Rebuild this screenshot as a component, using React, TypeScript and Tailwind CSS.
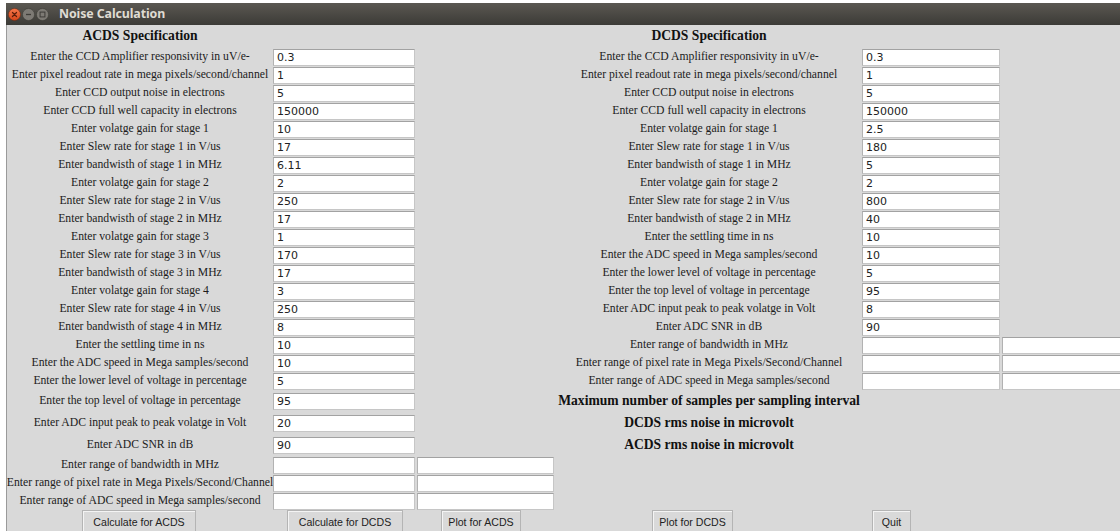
import React from "react";

type Cell =
  | { k: "head"; text: string }
  | { k: "label"; text: string }
  | { k: "bold"; text: string }
  | { k: "entry"; value: string }
  | { k: "none" };

const H = (text: string): Cell => ({ k: "head", text });
const L = (text: string): Cell => ({ k: "label", text });
const B = (text: string): Cell => ({ k: "bold", text });
const E = (value: string): Cell => ({ k: "entry", value });
const N: Cell = { k: "none" };

// Each row: ACDS label, entry, range entry | DCDS label, entry, range entry
const rows: Cell[][] = [
  [H("ACDS Specification"), N, N, H("DCDS Specification"), N, N],
  [L("Enter the CCD Amplifier responsivity in uV/e-"), E("0.3"), N, L("Enter the CCD Amplifier responsivity in uV/e-"), E("0.3"), N],
  [L("Enter pixel readout rate in mega pixels/second/channel"), E("1"), N, L("Enter pixel readout rate in mega pixels/second/channel"), E("1"), N],
  [L("Enter CCD output noise in electrons"), E("5"), N, L("Enter CCD output noise in electrons"), E("5"), N],
  [L("Enter CCD full well capacity in electrons"), E("150000"), N, L("Enter CCD full well capacity in electrons"), E("150000"), N],
  [L("Enter volatge gain for stage 1"), E("10"), N, L("Enter volatge gain for stage 1"), E("2.5"), N],
  [L("Enter Slew rate for stage 1 in V/us"), E("17"), N, L("Enter Slew rate for stage 1 in V/us"), E("180"), N],
  [L("Enter bandwisth of stage 1 in MHz"), E("6.11"), N, L("Enter bandwisth of stage 1 in MHz"), E("5"), N],
  [L("Enter volatge gain for stage 2"), E("2"), N, L("Enter volatge gain for stage 2"), E("2"), N],
  [L("Enter Slew rate for stage 2 in V/us"), E("250"), N, L("Enter Slew rate for stage 2 in V/us"), E("800"), N],
  [L("Enter bandwisth of stage 2 in MHz"), E("17"), N, L("Enter bandwisth of stage 2 in MHz"), E("40"), N],
  [L("Enter volatge gain for stage 3"), E("1"), N, L("Enter the settling time in ns"), E("10"), N],
  [L("Enter Slew rate for stage 3 in V/us"), E("170"), N, L("Enter the ADC speed in Mega samples/second"), E("10"), N],
  [L("Enter bandwisth of stage 3 in MHz"), E("17"), N, L("Enter the lower level of voltage in percentage"), E("5"), N],
  [L("Enter volatge gain for stage 4"), E("3"), N, L("Enter the top level of voltage in percentage"), E("95"), N],
  [L("Enter Slew rate for stage 4 in V/us"), E("250"), N, L("Enter ADC input peak to peak volatge in Volt"), E("8"), N],
  [L("Enter bandwisth of stage 4 in MHz"), E("8"), N, L("Enter ADC SNR in dB"), E("90"), N],
  [L("Enter the settling time in ns"), E("10"), N, L("Enter range of bandwidth in MHz"), E(""), E("")],
  [L("Enter the ADC speed in Mega samples/second"), E("10"), N, L("Enter range of pixel rate in Mega Pixels/Second/Channel"), E(""), E("")],
  [L("Enter the lower level of voltage in percentage"), E("5"), N, L("Enter range of ADC speed in Mega samples/second"), E(""), E("")],
  [L("Enter the top level of voltage in percentage"), E("95"), N, B("Maximum number of samples per sampling interval"), N, N],
  [L("Enter ADC input peak to peak volatge in Volt"), E("20"), N, B("DCDS rms noise in microvolt"), N, N],
  [L("Enter ADC SNR in dB"), E("90"), N, B("ACDS rms noise in microvolt"), N, N],
  [L("Enter range of bandwidth in MHz"), E(""), E(""), N, N, N],
  [L("Enter range of pixel rate in Mega Pixels/Second/Channel"), E(""), E(""), N, N, N],
  [L("Enter range of ADC speed in Mega samples/second"), E(""), E(""), N, N, N],
];

function GridCell({ cell }: { cell: Cell }) {
  switch (cell.k) {
    case "head":
    case "bold":
      return (
        <div className="flex items-center justify-center whitespace-nowrap font-['Liberation_Serif',serif] text-[13.6px] font-bold text-[#111]">
          {cell.text}
        </div>
      );
    case "label":
      return (
        <div className="flex items-center justify-center whitespace-nowrap font-['Liberation_Serif',serif] text-[11.7px] text-[#1c1c1c]">
          {cell.text}
        </div>
      );
    case "entry":
      return (
        <div className="flex items-center">
          <input
            readOnly
            value={cell.value}
            className="h-[17px] w-[calc(100%-2px)] border border-[#c6c6c6] border-t-[#a2a2a2] border-l-[#b2b2b2] bg-white pl-[3px] font-['DejaVu_Sans',sans-serif] text-[11px] text-[#222] outline-none"
          />
        </div>
      );
    default:
      return <div />;
  }
}

function TkButton({ label, className }: { label: string; className: string }) {
  return (
    <button
      className={`h-[26px] shrink-0 border border-[#b4b4b4] bg-[#d9d9d9] font-['Liberation_Sans',sans-serif] text-[10.6px] text-[#222] shadow-[inset_1px_1px_0_#f4f4f4] ${className}`}
    >
      {label}
    </button>
  );
}

function WindowControls() {
  return (
    <div className="flex items-center gap-[1px]">
      <svg width="13" height="13" viewBox="0 0 14 14">
        <defs>
          <linearGradient id="closeFill" x1="0" y1="0" x2="0" y2="1">
            <stop offset="0" stopColor="#f5774a" />
            <stop offset="1" stopColor="#d5461a" />
          </linearGradient>
        </defs>
        <circle cx="7" cy="7" r="6.5" fill="url(#closeFill)" stroke="#6e2a12" strokeWidth="0.6" />
        <path d="M4.8 4.8 L9.2 9.2 M9.2 4.8 L4.8 9.2" stroke="#5a1d0a" strokeWidth="1.3" strokeLinecap="round" />
      </svg>
      <svg width="13" height="13" viewBox="0 0 14 14">
        <circle cx="7" cy="7" r="6.5" fill="#7d7a74" stroke="#3a3935" strokeWidth="0.6" />
        <path d="M4.3 7 L9.7 7" stroke="#3e3c38" strokeWidth="1.4" />
      </svg>
      <svg width="13" height="13" viewBox="0 0 14 14">
        <circle cx="7" cy="7" r="6.5" fill="#7d7a74" stroke="#3a3935" strokeWidth="0.6" />
        <rect x="4.4" y="4.4" width="5.2" height="5.2" fill="none" stroke="#3e3c38" strokeWidth="1.1" />
      </svg>
    </div>
  );
}

export default function App() {
  return (
    <div className="h-[531px] w-[1120px] overflow-hidden bg-white pl-[6px] pt-[3px]">
      <div className="flex h-full w-[1200px] flex-col">
        {/* title bar */}
        <div className="flex h-[22px] shrink-0 items-center bg-linear-to-b from-[#5b5852] to-[#3c3b37] pl-[2px]">
          <WindowControls />
          <span className="ml-[10px] font-['Noto_Sans',sans-serif] text-[12.4px] font-bold tracking-[-0.1px] text-[#dfdbd2]">
            Noise Calculation
          </span>
        </div>
        {/* window body */}
        <div className="flex-1 border-l border-[#9a9a9a] bg-[#d9d9d9]">
          <div className="grid grid-cols-[266px_144px_139px_306px_140px_140px] grid-rows-[23px_repeat(19,18px)_repeat(3,22px)_repeat(3,18px)]">
            {rows.map((row, r) =>
              row.map((cell, c) => <GridCell key={`${r}-${c}`} cell={cell} />)
            )}
          </div>
          <div className="flex">
            <TkButton label="Calculate for ACDS" className="ml-[75px] w-[114px]" />
            <TkButton label="Calculate for DCDS" className="ml-[91px] w-[116px]" />
            <TkButton label="Plot for ACDS" className="ml-[38px] w-[80px]" />
            <TkButton label="Plot for DCDS" className="ml-[131px] w-[81px]" />
            <TkButton label="Quit" className="ml-[139px] w-[39px]" />
          </div>
        </div>
      </div>
    </div>
  );
}
